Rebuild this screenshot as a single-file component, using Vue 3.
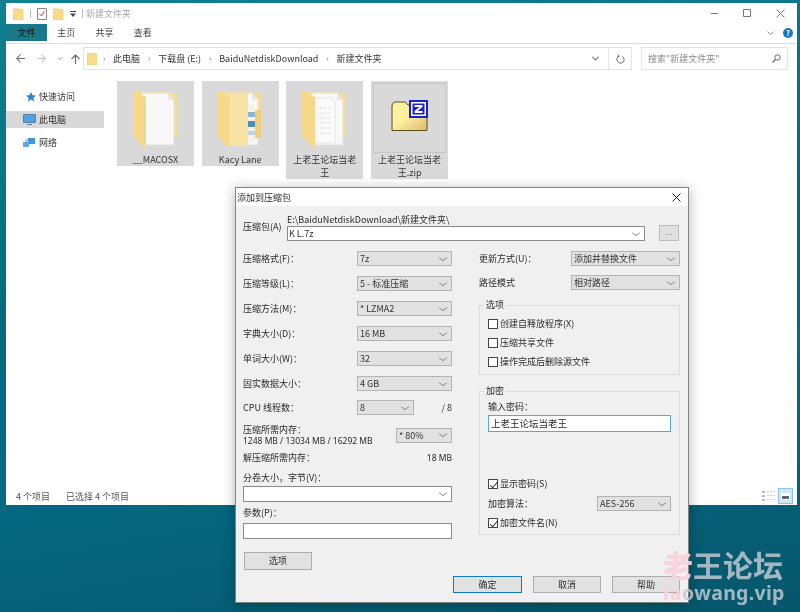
<template>
  <div class="desktop">
    <!-- 资源管理器窗口 -->
    <div class="explorer">
      <div class="titlebar">
        <svg class="qa-icon" width="11" height="12" viewBox="0 0 11 12"><path d="M0 1h7l3 1v10H0z" fill="#fbdc86" stroke="#e4c46c" stroke-width=".6" /></svg>
        <span class="qa-sep"></span>
        <svg class="qa-icon" width="10" height="13" viewBox="0 0 10 13"><path d="M.5 1.500h9v11h-9z" fill="#fff" stroke="#888" /><path d="M2.500 7l2 2 3-5" fill="none" stroke="#d0453a" /></svg>
        <svg class="qa-icon" width="11" height="12" viewBox="0 0 11 12"><path d="M0 1h7l3 1v10H0z" fill="#fbdc86" stroke="#e4c46c" stroke-width=".6" /></svg>
        <svg class="qa-icon" width="6" height="6" viewBox="0 0 6 6"><path d="M0 0h6v1H0zM0 2.500h6L3 6z" fill="#444" /></svg>
        <span class="qa-sep"></span>
        <span class="win-title">新建文件夹</span>
        <div class="win-btns">
          <svg width="9" height="9" viewBox="0 0 9 9"><path d="M1 4.500h7" stroke="#777" /></svg>
          <svg width="9" height="9" viewBox="0 0 9 9"><path d="M.5.500h7v7h-7z" fill="none" stroke="#777" /></svg>
          <svg width="9" height="9" viewBox="0 0 9 9"><path d="M.5.500l8 8M8.500.500l-8 8" stroke="#777" /></svg>
        </div>
      </div>

      <div class="ribbon">
        <span class="tab active">文件</span>
        <span class="tab">主页</span>
        <span class="tab">共享</span>
        <span class="tab">查看</span>
        <svg class="ribbon-chev" width="7" height="4" viewBox="0 0 7 4"><path d="M.5.500 3.500 3.500 6.500.500" fill="none" stroke="#888" /></svg>
        <span class="help">?</span>
      </div>

      <div class="navrow">
        <div class="nav-btns">
          <svg width="9" height="9" viewBox="0 0 9 9"><path d="M4.500.500.8 4.500l3.700 4M1 4.500h8" fill="none" stroke="#666" stroke-width="1.100" /></svg>
          <svg width="9" height="9" viewBox="0 0 9 9"><path d="M4.500.500l3.700 4-3.700 4M8 4.500H0" fill="none" stroke="#c4c4c4" stroke-width="1.100" /></svg>
          <svg width="5" height="3" viewBox="0 0 5 3"><path d="M.5.500 2.500 2.500 4.500.500" fill="none" stroke="#999" /></svg>
          <svg class="nav-up" width="9" height="10" viewBox="0 0 9 10"><path d="M.5 5 4.500 1l4 4M4.500 1v9" fill="none" stroke="#666" stroke-width="1.100" /></svg>
        </div>
        <div class="address">
          <svg class="addr-folder" width="10" height="12" viewBox="0 0 10 12"><path d="M0 0h7l3 1v11H0z" fill="#fbdc86" stroke="#e4c46c" stroke-width=".6" /></svg>
          <template v-for="part in crumbs" :key="part">
            <span class="crumb-sep">›</span>
            <span class="crumb">{{ part }}</span>
          </template>
          <div class="addr-end">
            <span class="addr-chev"></span>
            <span class="addr-refresh">
              <svg width="9" height="10" viewBox="0 0 9 10"><path d="M3 2.200A3.600 3.600 0 1 0 6.500 2.500M2 .5l1.300 1.800L1.200 3" fill="none" stroke="#666" /></svg>
            </span>
          </div>
        </div>
        <div class="search">
          <span>搜索"新建文件夹"</span>
          <svg width="9" height="9" viewBox="0 0 9 9"><circle cx="5.500" cy="3.500" r="2.700" fill="none" stroke="#666" /><path d="M3.500 5.500 .5 8.500" stroke="#666" stroke-width="1.300" /></svg>
        </div>
      </div>

      <div class="main">
        <div class="sidebar">
          <div class="side-item">
            <span class="side-icon"><svg width="10" height="10" viewBox="0 0 10 10"><path d="M5 0l1.500 3.300 3.500.3-2.700 2.300.9 3.600L5 7.600 1.800 9.500l.9-3.600L0 3.600l3.500-.3z" fill="#2f7fd6" /></svg></span>
            <span>快速访问</span>
          </div>
          <div class="side-item selected">
            <span class="side-icon"><svg width="13" height="11" viewBox="0 0 13 11"><path d="M.5.500h12v8H.5z" fill="#4ea2e6" stroke="#5c7f9c" /><path d="M4 10.500h5" stroke="#5c7f9c" /></svg></span>
            <span>此电脑</span>
          </div>
          <div class="side-item">
            <span class="side-icon"><svg width="13" height="11" viewBox="0 0 13 11"><path d="M5 1h7v6H5z" fill="#3f96dc" /><path d="M0 5h6v5H0z" fill="#5aa9e6" /><path d="M3 5V3h3" fill="none" stroke="#7a8a98" /></svg></span>
            <span>网络</span>
          </div>
        </div>

        <div class="tiles">
          <div v-for="t in tiles" :key="t.name" class="tile">
            <div class="tile-icon" :class="{ focused: t.kind === 'zip' }">
              <svg v-if="t.kind !== 'zip'" width="46" height="60" viewBox="0 0 46 60">
                <path d="M0 1h33l3 2h8v44H0z" fill="#f6dc93" />
                <path d="M9 3h26l6 7v45H9z" fill="#f8f8f8" stroke="#e2e2e2" />
                <path d="M35 3v7h6z" fill="#e8e8e8" />
                <template v-if="t.kind === 'pics'">
                  <path d="M30 14h8v38h-8z" fill="#f4f2ea" />
                  <path d="M30 22h8v5h-8z" fill="#8ab6cf" />
                  <path d="M30 31h8v6h-8z" fill="#4a8fb4" />
                  <path d="M30 41h8v4h-8z" fill="#bcd4e0" />
                  <path d="M9 3h22v52H9z" fill="#f8e3a6" />
                  <path d="M38 20h6v28h-6z" fill="#f1cf7c" />
                </template>
                <template v-if="t.kind === 'text'">
                  <path d="M13 8h17l3 4v41H13z" fill="#fbfbfb" stroke="#e6e6e6" />
                  <path d="M16 18h14M16 23h14M16 28h14M16 33h14M16 38h14M16 43h14" stroke="#d5d5d5" stroke-dasharray="1 1" />
                </template>
                <path d="M0 1l13 6v52L0 46z" fill="#f6d988" />
              </svg>
              <svg v-else width="38" height="32" viewBox="0 0 38 32">
                <defs>
                  <linearGradient id="zipFill" x1="0" y1="0" x2="1" y2="1">
                    <stop offset="0.45" stop-color="#fdf09f" />
                    <stop offset="1" stop-color="#dfb872" />
                  </linearGradient>
                </defs>
                <path d="M1 5l2-3h11l3 3h19v25.500H1z" fill="url(#zipFill)" stroke="#56501f" />
                <path d="M19 1h17v16H19z" fill="#fff" stroke="#1a21c8" stroke-width="2" />
                <path d="M21.500 3.500h12v11h-12z" fill="#1a21c8" />
                <path d="M23.500 5h8v2l-5 4h5v2h-8v-2l5-4h-5z" fill="#fff" />
              </svg>
            </div>
            <div class="tile-name">{{ t.name }}</div>
          </div>
        </div>
      </div>

      <div class="statusbar">
        <span>4 个项目</span>
        <span>已选择 4 个项目</span>
        <div class="view-btns">
          <svg width="13" height="10" viewBox="0 0 13 10"><path d="M0 0h3v2H0zM0 4h3v2H0zM0 8h3v2H0z" fill="#bbb" /><path d="M5 .500h8M5 4.500h8M5 8.500h8" stroke="#ccc" stroke-dasharray="2 1" /></svg>
          <span class="view-on"><svg width="9" height="7" viewBox="0 0 9 7"><path d="M0 0h9v7H0z" fill="#fff" /><path d="M1 3h7v3H1z" fill="#666" /></svg></span>
        </div>
      </div>
    </div>

    <!-- 压缩对话框 -->
    <div class="dialog">
      <div class="dlg-title">
        <span>添加到压缩包</span>
        <svg width="9" height="9" viewBox="0 0 9 9"><path d="M.5.500l8 8M8.500.500l-8 8" stroke="#222" /></svg>
      </div>
      <div class="dlg-body">
        <div class="archive">
          <span class="archive-label">压缩包(A)</span>
          <div class="archive-field">
            <div class="archive-path">E:\BaiduNetdiskDownload\新建文件夹\</div>
            <div class="field sel">K L.7z</div>
          </div>
          <div class="more">...</div>
        </div>

        <div class="cols">
          <div class="col">
            <div v-for="r in leftRows" :key="r.label" class="row">
              <span class="row-label">{{ r.label }}</span>
              <div class="drop sel">{{ r.value }}</div>
            </div>
            <div class="row cpu">
              <span class="row-label">CPU 线程数：</span>
              <div class="drop cpu-drop sel">8</div>
              <span class="of">/ 8</span>
            </div>
            <div class="mem">
              <div>
                <div>压缩所需内存：</div>
                <div class="mem-num">1248 MB / 13034 MB / 16292 MB</div>
              </div>
              <div class="drop mem-drop sel">* 80%</div>
            </div>
            <div class="unmem">
              <span>解压缩所需内存：</span>
              <span class="mem-num">18 MB</span>
            </div>
            <div class="vol-label">分卷大小，字节(V)：</div>
            <div class="field sel tall"></div>
            <div class="param-label">参数(P)：</div>
            <div class="field tall"></div>
            <div class="btn opt-btn">选项</div>
          </div>

          <div class="col">
            <div class="row">
              <span class="row-label">更新方式(U)：</span>
              <div class="drop wide sel">添加并替换文件</div>
            </div>
            <div class="row path-row">
              <span class="row-label">路径模式</span>
              <div class="drop wide sel">相对路径</div>
            </div>
            <fieldset class="group">
              <legend>选项</legend>
              <label v-for="o in options" :key="o" class="check"><i class="box"></i>{{ o }}</label>
            </fieldset>
            <fieldset class="group enc">
              <legend>加密</legend>
              <div class="pw-label">输入密码：</div>
              <div class="pw">上老王论坛当老王</div>
              <label class="check show-pw"><i class="box on"></i>显示密码(S)</label>
              <div class="algo">
                <span>加密算法：</span>
                <div class="drop algo-drop sel">AES-256</div>
              </div>
              <label class="check"><i class="box on"></i>加密文件名(N)</label>
            </fieldset>
          </div>
        </div>

        <div class="dlg-actions">
          <div class="btn primary">确定</div>
          <div class="btn">取消</div>
          <div class="btn">帮助</div>
        </div>
      </div>
    </div>

    <!-- 水印 -->
    <div class="watermark">
      <div class="wm-cn"><b>老</b>王论坛</div>
      <div class="wm-en"><b>la</b>owang.vip</div>
    </div>
  </div>
</template>

<script setup>
const crumbs = ['此电脑', '下载盘 (E:)', 'BaiduNetdiskDownload', '新建文件夹']

const tiles = [
  { name: '__MACOSX', kind: 'blank' },
  { name: 'Kacy Lane', kind: 'pics' },
  { name: '上老王论坛当老王', kind: 'text' },
  { name: '上老王论坛当老王.zip', kind: 'zip' }
]

const leftRows = [
  { label: '压缩格式(F)：', value: '7z' },
  { label: '压缩等级(L)：', value: '5 - 标准压缩' },
  { label: '压缩方法(M)：', value: '*  LZMA2' },
  { label: '字典大小(D)：', value: '16 MB' },
  { label: '单词大小(W)：', value: '32' },
  { label: '固实数据大小：', value: '4 GB' }
]

const options = ['创建自释放程序(X)', '压缩共享文件', '操作完成后删除源文件']
</script>

<style>
html, body {
  margin: 0;
  overflow: hidden;
}
</style>

<style scoped>
* {
  box-sizing: border-box;
}

.desktop {
  position: relative;
  width: 800px;
  height: 612px;
  overflow: hidden;
  background: linear-gradient(170deg, #0f8191 0%, #04687f 45%, #056a82 65%, #06566c 100%);
  font-family: "Noto Sans CJK SC", "Noto Sans", sans-serif;
  font-size: 9px;
  color: #2a2a2a;
  filter: blur(0.5px);
}

/* explorer */
.explorer {
  position: absolute;
  left: 6px;
  top: 3px;
  width: 791px;
  height: 502px;
  background: #fff;
  display: flex;
  flex-direction: column;
}

.titlebar {
  height: 21px;
  display: flex;
  align-items: center;
  padding-left: 7px;
  gap: 6px;
}

.qa-sep {
  width: 1px;
  height: 9px;
  background: #bbb;
}

.win-title {
  margin-left: -3px;
  color: #a8a8a8;
}

.win-btns {
  margin-left: auto;
  display: flex;
  gap: 24px;
  padding-right: 12px;
}

.ribbon {
  height: 20px;
  display: flex;
  align-items: flex-start;
  border-bottom: 1px solid #dcdcdc;
}

.tab {
  width: 38.300px;
  height: 17px;
  line-height: 17px;
  text-align: center;
  color: #444;
}

.tab.active {
  width: 41px;
  background: #17798a;
  color: #111;
}

.ribbon-chev {
  margin-left: auto;
  margin-top: 7px;
}

.help {
  width: 10px;
  height: 10px;
  margin: 4px 4px 0 9px;
  border-radius: 50%;
  background: #1477c8;
  color: #fff;
  font-size: 8px;
  font-weight: 700;
  line-height: 10px;
  text-align: center;
}

.navrow {
  display: flex;
  align-items: center;
  height: 23px;
  margin-top: 3px;
}

.nav-btns {
  width: 77px;
  display: flex;
  align-items: center;
  padding-left: 10px;
  gap: 12px;
}

.nav-btns .nav-up {
  margin-left: -4px;
}

.address {
  width: 549px;
  height: 23px;
  border: 1px solid #e3e3e3;
  display: flex;
  align-items: center;
  padding-left: 3px;
  color: #333;
}

.addr-folder {
  margin-right: -2px;
}

.crumb-sep {
  margin: 0 7.700px;
  color: #888;
}

.addr-end {
  margin-left: auto;
  height: 100%;
  display: flex;
  align-items: center;
}

.addr-chev {
  width: 5px;
  height: 5px;
  margin-right: 10px;
  border-right: 1px solid #555;
  border-bottom: 1px solid #555;
  transform: rotate(45deg) translate(-1px, -1px);
}

.addr-refresh {
  width: 23px;
  height: 100%;
  display: flex;
  align-items: center;
  justify-content: center;
  border-left: 1px solid #e3e3e3;
}

.search {
  width: 147px;
  height: 23px;
  margin-left: 9px;
  border: 1px solid #e3e3e3;
  display: flex;
  align-items: center;
  justify-content: space-between;
  padding: 0 6px;
  color: #888;
}

.main {
  flex: 1;
  display: flex;
  min-height: 0;
}

.sidebar {
  width: 98px;
  padding-top: 18px;
  display: flex;
  flex-direction: column;
  gap: 6px;
}

.side-item {
  height: 17px;
  display: flex;
  align-items: center;
  padding-left: 17px;
  white-space: nowrap;
  color: #333;
}

.side-item.selected {
  background: #d9d9d9;
}

.side-icon {
  width: 13px;
  margin-right: 3px;
  display: flex;
  justify-content: flex-end;
}

.tiles {
  padding: 11px 0 0 13px;
  display: flex;
  align-items: flex-start;
  gap: 7.700px;
}

.tile {
  width: 77px;
  background: #d9d9d9;
  text-align: center;
  line-height: 13px;
  color: #333;
}

.tile-icon {
  height: 72px;
  display: flex;
  align-items: center;
  justify-content: center;
  padding-top: 6px;
}

.tile-icon.focused {
  height: 70px;
  margin: 2px 2px 0;
  border: 1px solid #c6c6c6;
  padding: 0 0 5px;
}

.tile-name {
  padding: 0 4px;
  word-break: break-all;
}

.statusbar {
  height: 18px;
  display: flex;
  align-items: center;
  gap: 16px;
  padding-left: 10px;
  color: #555;
}

.view-btns {
  margin-left: auto;
  display: flex;
  align-items: center;
  gap: 3px;
  padding-right: 4px;
}

.view-on {
  width: 15px;
  height: 16px;
  background: #cde6f7;
  border: 1px solid #8cc4e8;
  display: flex;
  align-items: center;
  justify-content: center;
}

/* dialog */
.dialog {
  position: absolute;
  left: 235px;
  top: 187px;
  width: 454px;
  height: 416px;
  background: #f0f0f0;
  border: 1px solid #7d8484;
  box-shadow: 0 2px 12px rgba(0, 0, 0, 0.3);
  display: flex;
  flex-direction: column;
}

.dlg-title {
  height: 18px;
  background: #fff;
  display: flex;
  align-items: center;
  justify-content: space-between;
  padding: 0 7px 0 1px;
}

.dlg-body {
  flex: 1;
  padding: 8px 8px 0 7px;
  display: flex;
  flex-direction: column;
}

.archive {
  display: flex;
  align-items: flex-end;
}

.archive-label {
  width: 44px;
  line-height: 14px;
  margin-bottom: 7px;
}

.archive-field {
  width: 358px;
}

.archive-path {
  line-height: 12px;
}

.more {
  width: 20px;
  height: 16px;
  margin-left: 14px;
  background: #e1e1e1;
  border: 1px solid #bdbdbd;
  text-align: center;
  line-height: 12px;
  color: #777;
  font-size: 8px;
}

.field {
  height: 15px;
  background: #fff;
  border: 1px solid #8a8a8a;
  line-height: 13px;
  padding-left: 1px;
}

.field.tall {
  height: 16px;
}

.sel {
  display: flex;
  align-items: center;
}

.sel::after {
  content: "";
  width: 5px;
  height: 5px;
  margin-left: auto;
  margin-right: 5px;
  border-right: 1px solid #888;
  border-bottom: 1px solid #888;
  transform: translateY(-1px) scaleY(0.7) rotate(45deg);
}

.cols {
  display: flex;
  gap: 27px;
  margin-top: 10px;
}

.col {
  width: 209px;
}

.col + .col {
  width: 201px;
}

.row {
  height: 15px;
  display: flex;
  align-items: center;
  margin-bottom: 10px;
}

.row-label {
  width: 114px;
  white-space: nowrap;
}

.col + .col .row-label {
  width: 92px;
}

.drop {
  width: 95px;
  height: 15px;
  background: #e1e1e1;
  border: 1px solid #b4b4b4;
  padding-left: 2px;
  color: #333;
}

.drop.wide {
  width: 109px;
}

.row.cpu {
  margin-top: -1px;
  margin-bottom: 0;
}

.cpu-drop {
  width: 57px;
}

.of {
  margin-left: auto;
  color: #333;
}

.mem {
  margin-top: 9px;
  display: flex;
  justify-content: space-between;
  align-items: center;
  line-height: 11px;
}

.mem-num {
  font-family: "Noto Sans", sans-serif;
  font-size: 8.500px;
}

.mem-drop {
  width: 56px;
}

.unmem {
  margin-top: 5px;
  display: flex;
  justify-content: space-between;
  line-height: 13px;
}

.vol-label {
  margin-top: 7px;
  line-height: 13px;
}

.param-label {
  margin-top: 4px;
  line-height: 13px;
  margin-bottom: 4px;
}

.vol-label + .field {
  margin-top: 2px;
}

.btn {
  width: 68px;
  height: 17px;
  background: #e1e1e1;
  border: 1px solid #adadad;
  text-align: center;
  line-height: 15px;
}

.opt-btn {
  height: 18px;
  margin-top: 13px;
  margin-left: 1px;
}

.path-row {
  margin-top: -1px;
  margin-bottom: 0;
}

.group {
  margin: 9px 0 0;
  padding: 6px 8px 6px;
  border: 1px solid #dcdcdc;
  display: flex;
  flex-direction: column;
  gap: 6px;
}

.group legend {
  margin-left: -4px;
  padding: 0 2px;
  line-height: 12px;
}

.check {
  height: 13px;
  display: flex;
  align-items: center;
  gap: 2px;
  white-space: nowrap;
}

.box {
  width: 10px;
  height: 10px;
  background: #fff;
  border: 1px solid #444;
  position: relative;
}

.box.on::after {
  content: "";
  position: absolute;
  left: 2.500px;
  top: 0;
  width: 3px;
  height: 6.500px;
  border-right: 1px solid #333;
  border-bottom: 1px solid #333;
  transform: rotate(40deg);
}

.enc {
  margin-top: 10px;
  height: 150px;
  padding-top: 4px;
  gap: 0;
}

.pw-label {
  line-height: 12px;
}

.pw {
  width: 183px;
  height: 17px;
  margin-top: 2px;
  background: #fff;
  border: 1px solid #5aa7dc;
  line-height: 15px;
  padding-left: 2px;
  font-size: 9.500px;
}

.show-pw {
  margin-top: 45px;
}

.algo {
  margin-top: 6px;
  display: flex;
  align-items: center;
  justify-content: space-between;
  width: 183px;
}

.algo-drop {
  width: 74px;
}

.algo + .check {
  margin-top: 5px;
}

.dlg-actions {
  display: flex;
  justify-content: flex-end;
  gap: 11px;
  margin-top: 6px;
}

.btn.primary {
  width: 69px;
  border: 1.500px solid #0f78c8;
}

/* watermark */
.watermark {
  position: absolute;
  left: 663px;
  top: 547px;
  pointer-events: none;
  color: rgba(190, 200, 206, 0.85);
  white-space: nowrap;
}

.wm-cn {
  font-size: 30px;
  font-weight: 700;
  line-height: 34px;
}

.wm-en {
  font-family: "Noto Sans", sans-serif;
  font-size: 19.500px;
  font-weight: 700;
  line-height: 24px;
  letter-spacing: 0.3px;
}

.watermark b {
  color: rgba(248, 208, 218, 0.92);
}
</style>
